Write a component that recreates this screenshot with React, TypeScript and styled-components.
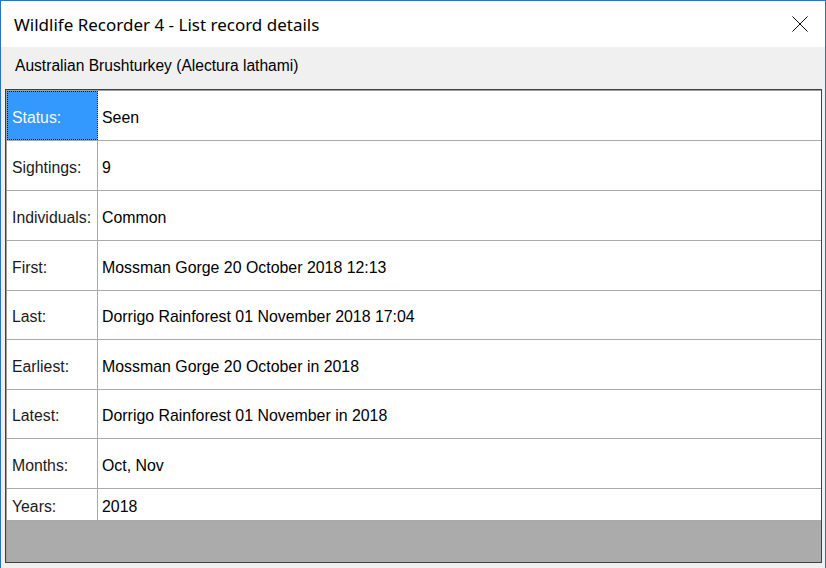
import React from 'react';
import styled, { createGlobalStyle } from 'styled-components';

const GlobalStyle = createGlobalStyle`
  html, body {
    margin: 0;
    padding: 0;
    background: #f0f0f0;
  }
`;

const Window = styled.div`
  box-sizing: border-box;
  width: 826px;
  height: 568px;
  display: flex;
  flex-direction: column;
  overflow: hidden;
  background: #f0f0f0;
  border: 1px solid #1f74d6;
  border-bottom: none;
  font-family: "Liberation Sans", Arial, sans-serif;
`;

const TitleBar = styled.div`
  height: 46px;
  flex-shrink: 0;
  padding: 0 0 0 13px;
  display: flex;
  align-items: center;
  justify-content: space-between;
  background: #fff;
`;

const Title = styled.span`
  color: #000;
  font-family: "Noto Sans", "Liberation Sans", sans-serif;
  font-size: 17px;
  padding-top: 1px;
`;

const CloseButton = styled.div`
  width: 46px;
  height: 46px;
  margin-right: 2px;
  display: flex;
  align-items: center;
  justify-content: center;
`;

const SubHeader = styled.div`
  height: 42px;
  flex-shrink: 0;
  padding: 0 0 5px 14px;
  box-sizing: border-box;
  display: flex;
  align-items: center;
  color: #000;
  font-size: 15.6px;
`;

const Grid = styled.div`
  flex: 1;
  margin: 0 3px 5px 4px;
  display: flex;
  flex-direction: column;
  background: #ababab;
  border: 1px solid #404040;
  box-shadow: inset 1px 1px 0 #a0a0a0;
  padding: 1px 0 0 1px;
`;

const Row = styled.div<{ $h: number }>`
  display: flex;
  height: ${p => p.$h}px;
  flex-shrink: 0;
  background: #fff;
  border-bottom: 1px solid #a9a9a9;
`;

const LabelCell = styled.div<{ $selected?: boolean }>`
  box-sizing: border-box;
  width: 91px;
  flex-shrink: 0;
  padding: 4px 0 0 5px;
  display: flex;
  align-items: center;
  border-right: 1px solid #a9a9a9;
  font-size: 15.8px;
  color: ${p => (p.$selected ? '#f4f8ff' : '#1a1a1a')};
  background: ${p => (p.$selected ? '#3399ff' : '#fff')};
  outline: ${p => (p.$selected ? '1px dotted #1a1a40' : 'none')};
  outline-offset: -1px;
`;

const ValueCell = styled.div`
  flex: 1;
  padding: 4px 0 0 4px;
  display: flex;
  align-items: center;
  font-size: 15.9px;
  color: #000;
`;

const rows = [
  { label: 'Status:', value: 'Seen', h: 49 },
  { label: 'Sightings:', value: '9', h: 49 },
  { label: 'Individuals:', value: 'Common', h: 49 },
  { label: 'First:', value: 'Mossman Gorge 20 October 2018 12:13', h: 49 },
  { label: 'Last:', value: 'Dorrigo Rainforest 01 November 2018 17:04', h: 48 },
  { label: 'Earliest:', value: 'Mossman Gorge 20 October in 2018', h: 49 },
  { label: 'Latest:', value: 'Dorrigo Rainforest 01 November in 2018', h: 48 },
  { label: 'Months:', value: 'Oct, Nov', h: 49 },
  { label: 'Years:', value: '2018', h: 31 },
];

export default function App() {
  return (
    <>
      <GlobalStyle />
      <Window>
        <TitleBar>
          <Title>Wildlife Recorder 4 - List record details</Title>
          <CloseButton>
            <svg width="16" height="16" viewBox="0 0 16 16">
              <path d="M0.5 0.5L15.5 15.5M15.5 0.5L0.5 15.5" stroke="#000" strokeWidth="1" />
            </svg>
          </CloseButton>
        </TitleBar>
        <SubHeader>Australian Brushturkey (Alectura lathami)</SubHeader>
        <Grid>
          {rows.map((r, i) => (
            <Row key={r.label} $h={r.h}>
              <LabelCell $selected={i === 0}>{r.label}</LabelCell>
              <ValueCell>{r.value}</ValueCell>
            </Row>
          ))}
        </Grid>
      </Window>
    </>
  );
}
